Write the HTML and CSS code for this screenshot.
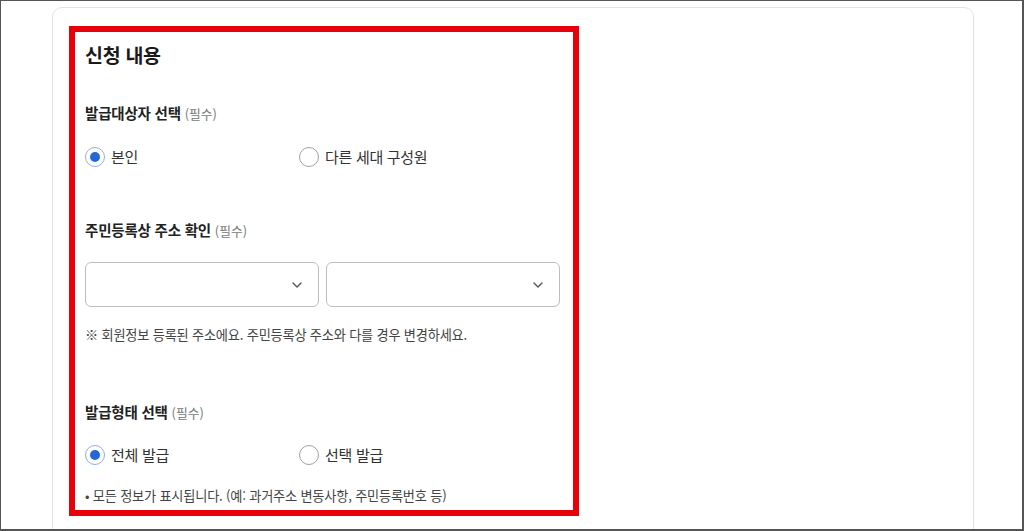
FILE: index.html
```html
<!DOCTYPE html>
<html lang="ko">
<head>
<meta charset="utf-8">
<link rel="stylesheet" href="styles.css">
</head>
<body>
<div class="screen">
  <div class="card">
    <div class="highlight">
      <h2 class="title">신청 내용</h2>

      <div class="label label-first">발급대상자 선택 <span class="req">(필수)</span></div>
      <div class="radios radios-first">
        <div class="radio-item"><span class="radio checked"></span><span class="radio-text">본인</span></div>
        <div class="radio-item"><span class="radio"></span><span class="radio-text">다른 세대 구성원</span></div>
      </div>

      <div class="label label-addr">주민등록상 주소 확인 <span class="req">(필수)</span></div>
      <div class="selects">
        <div class="select"><svg class="chev" viewBox="0 0 10 6" width="10" height="6"><path d="M1 1l4 4 4-4" fill="none" stroke="#555" stroke-width="1.4" stroke-linecap="round" stroke-linejoin="round"/></svg></div>
        <div class="select"><svg class="chev" viewBox="0 0 10 6" width="10" height="6"><path d="M1 1l4 4 4-4" fill="none" stroke="#555" stroke-width="1.4" stroke-linecap="round" stroke-linejoin="round"/></svg></div>
      </div>
      <p class="note">※ 회원정보 등록된 주소에요. 주민등록상 주소와 다를 경우 변경하세요.</p>

      <div class="label label-type">발급형태 선택 <span class="req">(필수)</span></div>
      <div class="radios radios-type">
        <div class="radio-item"><span class="radio checked"></span><span class="radio-text">전체 발급</span></div>
        <div class="radio-item"><span class="radio"></span><span class="radio-text">선택 발급</span></div>
      </div>
      <p class="note bullet">• 모든 정보가 표시됩니다. (예: 과거주소 변동사항, 주민등록번호 등)</p>
    </div>
  </div>
</div>
</body>
</html>
```

FILE: styles.css
```css
* { box-sizing: border-box; }
html, body { margin: 0; padding: 0; background: #fff; }
body {
  font-family: "Noto Sans CJK KR", "Noto Sans", sans-serif;
  color: #222;
}
.screen {
  width: 1024px;
  height: 531px;
  border: 1px solid #555;
  border-bottom-width: 2px;
  border-right-width: 2px;
  overflow: hidden;
  background: #fff;
}
.card {
  margin: 6px 0 0 51px;
  width: 922px;
  height: 560px;
  border: 1px solid #e2e2e2;
  border-radius: 10px;
  padding: 18px 0 0 16px;
}
.highlight {
  width: 510px;
  height: 490px;
  border: 6px solid #e8000b;
  padding: 9px 13px 0 10px;
  display: flex;
  flex-direction: column;
}
.title {
  margin: 0;
  font-size: 19.5px;
  line-height: 28px;
  font-weight: 700;
  letter-spacing: -0.3px;
  color: #1a1a1a;
}
.label {
  font-size: 14.5px;
  line-height: 20px;
  font-weight: 700;
  letter-spacing: -0.2px;
  color: #222;
}
.label-first { margin-top: 34px; }
.label-addr { margin-top: 52px; }
.label-type { margin-top: 57px; }
.req {
  font-size: 12.8px;
  font-weight: 400;
  color: #777;
  letter-spacing: 0;
}
.radios {
  display: flex;
  height: 22px;
}
.radios-first { margin-top: 22px; }
.radios-type { margin-top: 21px; }
.radio-item {
  display: flex;
  align-items: center;
  gap: 6px;
  width: 214px;
}
.radio {
  width: 20px;
  height: 20px;
  border-radius: 50%;
  border: 1px solid #a0a0a0;
  display: flex;
  align-items: center;
  justify-content: center;
  flex: none;
}
.radio.checked { border-color: #8eaee6; }
.radio.checked::after {
  content: "";
  width: 10px;
  height: 10px;
  border-radius: 50%;
  background: #2466d8;
}
.radio-text {
  font-size: 15px;
  line-height: 22px;
  color: #333;
  letter-spacing: -0.3px;
}
.selects {
  display: flex;
  gap: 7px;
  margin-top: 21px;
}
.select {
  width: 234px;
  height: 45px;
  border: 1px solid #bdbdbd;
  border-radius: 6px;
  display: flex;
  align-items: center;
  justify-content: flex-end;
  padding-right: 16px;
}
.chev { display: block; }
.note {
  margin: 18px 0 0;
  font-size: 13.2px;
  line-height: 20px;
  color: #444;
  letter-spacing: -0.2px;
}
.bullet { margin-top: 20px; }
```
